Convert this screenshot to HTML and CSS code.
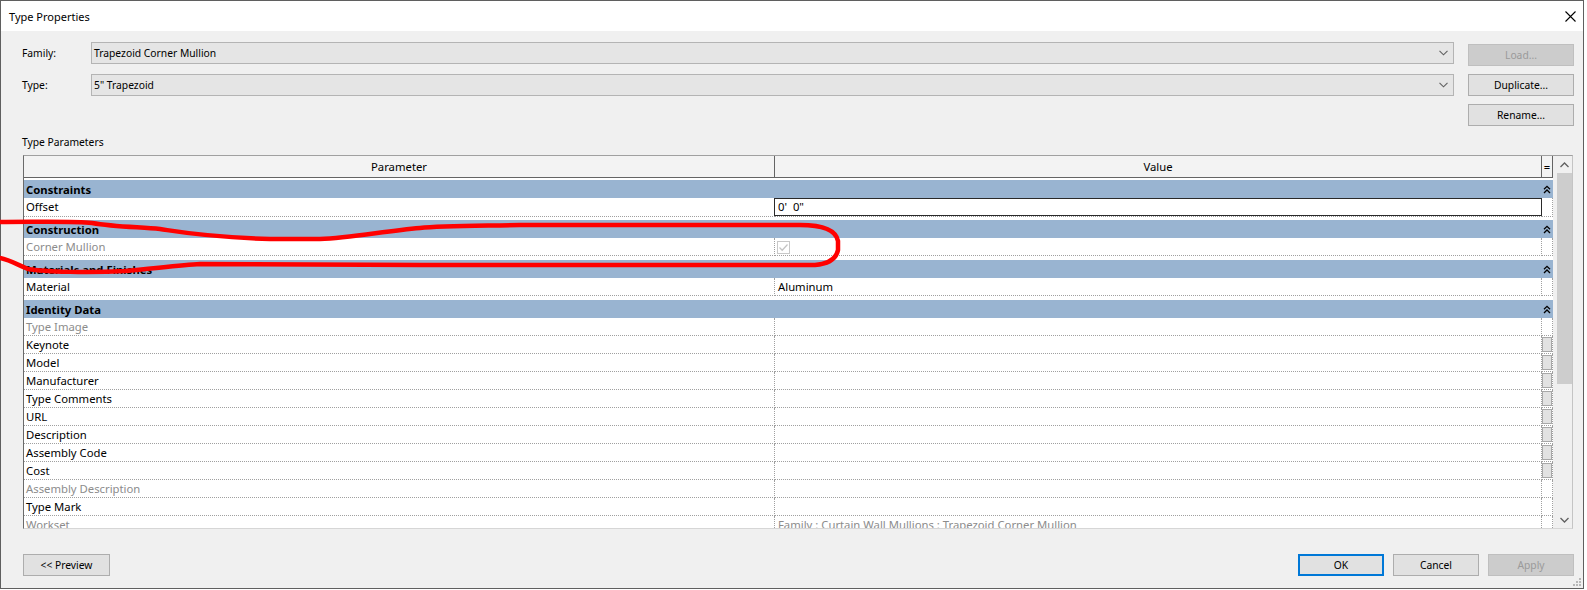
FILE: index.html
```html
<!DOCTYPE html>
<html lang="en">
<head>
    <meta charset="UTF-8">
    <title>Type Properties</title>
    <link rel="stylesheet" href="styles.css">
</head>
<body>

<div class="dialog">

    <!-- Title bar -->
    <div class="titlebar">
        <span>Type Properties</span>
        <svg class="close" width="11" height="11" viewBox="0 0 11 11"><path d="M0.5 0.5 L10.5 10.5 M10.5 0.5 L0.5 10.5" stroke="#000" stroke-width="1.1" fill="none"/></svg>
    </div>

    <div class="content">

        <!-- Family / type pickers -->
        <div class="top">
            <div class="fields">
                <div class="field">
                    <label>Family:</label>
                    <div class="combo"><span>Trapezoid Corner Mullion</span><svg width="9" height="6" viewBox="0 0 9 6"><path d="M0.5 0.8 L4.5 4.8 L8.5 0.8" stroke="#606060" stroke-width="1.1" fill="none"/></svg></div>
                </div>
                <div class="field">
                    <label>Type:</label>
                    <div class="combo"><span>5" Trapezoid</span><svg width="9" height="6" viewBox="0 0 9 6"><path d="M0.5 0.8 L4.5 4.8 L8.5 0.8" stroke="#606060" stroke-width="1.1" fill="none"/></svg></div>
                </div>
            </div>
            <div class="side">
                <button class="btn" disabled>Load...</button>
                <button class="btn">Duplicate...</button>
                <button class="btn">Rename...</button>
            </div>
        </div>

        <div class="section-label">Type Parameters</div>

        <!-- Parameter grid -->
        <div class="grid">
            <div class="grid-main">
                <div class="grid-head">
                    <div>Parameter</div>
                    <div>Value</div>
                    <div>=</div>
                </div>
                <div class="grid-body">

                    <div class="group">
                        <div class="band"><span>Constraints</span><svg width="8" height="9" viewBox="0 0 8 9"><path d="M1 4.3 L4 1.3 L7 4.3 M1 8 L4 5 L7 8" stroke="#000" stroke-width="1.3" fill="none"/></svg></div>
                        <div class="row">
                            <div class="cell">Offset</div>
                            <div class="cell value"><div class="edit">0'  0"</div></div>
                            <div class="cell eq"></div>
                        </div>
                    </div>

                    <div class="group">
                        <div class="band"><span>Construction</span><svg width="8" height="9" viewBox="0 0 8 9"><path d="M1 4.3 L4 1.3 L7 4.3 M1 8 L4 5 L7 8" stroke="#000" stroke-width="1.3" fill="none"/></svg></div>
                        <div class="row">
                            <div class="cell dim">Corner Mullion</div>
                            <div class="cell value"><svg class="check" width="13" height="13" viewBox="0 0 13 13"><rect x="0.5" y="0.5" width="12" height="12" fill="#fff" stroke="#c8c8c8"/><path d="M2.5 6.5 L5.2 9.2 L10.5 3.5" stroke="#c4c4c4" stroke-width="1.3" fill="none"/></svg></div>
                            <div class="cell eq"></div>
                        </div>
                    </div>

                    <div class="group">
                        <div class="band"><span>Materials and Finishes</span><svg width="8" height="9" viewBox="0 0 8 9"><path d="M1 4.3 L4 1.3 L7 4.3 M1 8 L4 5 L7 8" stroke="#000" stroke-width="1.3" fill="none"/></svg></div>
                        <div class="row">
                            <div class="cell">Material</div>
                            <div class="cell value">Aluminum</div>
                            <div class="cell eq"></div>
                        </div>
                    </div>

                    <div class="group">
                        <div class="band"><span>Identity Data</span><svg width="8" height="9" viewBox="0 0 8 9"><path d="M1 4.3 L4 1.3 L7 4.3 M1 8 L4 5 L7 8" stroke="#000" stroke-width="1.3" fill="none"/></svg></div>
                        <div class="row"><div class="cell dim">Type Image</div><div class="cell value"></div><div class="cell eq"></div></div>
                        <div class="row"><div class="cell">Keynote</div><div class="cell value"></div><div class="cell eq"><div class="eqbtn"></div></div></div>
                        <div class="row"><div class="cell">Model</div><div class="cell value"></div><div class="cell eq"><div class="eqbtn"></div></div></div>
                        <div class="row"><div class="cell">Manufacturer</div><div class="cell value"></div><div class="cell eq"><div class="eqbtn"></div></div></div>
                        <div class="row"><div class="cell">Type Comments</div><div class="cell value"></div><div class="cell eq"><div class="eqbtn"></div></div></div>
                        <div class="row"><div class="cell">URL</div><div class="cell value"></div><div class="cell eq"><div class="eqbtn"></div></div></div>
                        <div class="row"><div class="cell">Description</div><div class="cell value"></div><div class="cell eq"><div class="eqbtn"></div></div></div>
                        <div class="row"><div class="cell">Assembly Code</div><div class="cell value"></div><div class="cell eq"><div class="eqbtn"></div></div></div>
                        <div class="row"><div class="cell">Cost</div><div class="cell value"></div><div class="cell eq"><div class="eqbtn"></div></div></div>
                        <div class="row"><div class="cell dim">Assembly Description</div><div class="cell value"></div><div class="cell eq"></div></div>
                        <div class="row"><div class="cell">Type Mark</div><div class="cell value"></div><div class="cell eq"></div></div>
                        <div class="row"><div class="cell dim">Workset</div><div class="cell value dim">Family : Curtain Wall Mullions : Trapezoid Corner Mullion</div><div class="cell eq"></div></div>
                    </div>

                </div>
            </div>

            <!-- Vertical scrollbar -->
            <div class="scrollbar">
                <div class="arrow"><svg width="9" height="6" viewBox="0 0 9 6"><path d="M0.5 5 L4.5 1 L8.5 5" stroke="#606060" stroke-width="1.3" fill="none"/></svg></div>
                <div class="track"><div class="thumb"></div></div>
                <div class="arrow"><svg width="9" height="6" viewBox="0 0 9 6"><path d="M0.5 1 L4.5 5 L8.5 1" stroke="#606060" stroke-width="1.3" fill="none"/></svg></div>
            </div>
        </div>

        <!-- Dialog buttons -->
        <div class="footer">
            <button class="btn preview">&lt;&lt; Preview</button>
            <div class="actions">
                <button class="btn default">OK</button>
                <button class="btn">Cancel</button>
                <button class="btn" disabled>Apply</button>
            </div>
        </div>

    </div>

    <svg class="grip" width="9" height="9" viewBox="0 0 9 9">
        <rect x="6" y="0" width="2" height="2" fill="#b8b8b8"/>
        <rect x="3" y="3" width="2" height="2" fill="#b8b8b8"/>
        <rect x="6" y="3" width="2" height="2" fill="#b8b8b8"/>
        <rect x="0" y="6" width="2" height="2" fill="#b8b8b8"/>
        <rect x="3" y="6" width="2" height="2" fill="#b8b8b8"/>
        <rect x="6" y="6" width="2" height="2" fill="#b8b8b8"/>
    </svg>

    <!-- Hand drawn markup over the dialog -->
    <svg class="markup" width="1587" height="590" viewBox="0 0 1587 590">
        <path d="M0 222 C40 222 75 221 92 223 C115 227 140 227 160 229 C180 232 205 237 270 239 L320 239 C350 238 385 231 420 228 C440 226 470 226 520 225 L800 225 C822 225 836 230 838 241 L838 250 C836 260 827 264 815 265 L420 265 L200 264 C180 265 150 269 125 271 C90 273 45 272 28 269 C18 265 10 260 0 258" stroke="#ff0000" stroke-width="4.5" fill="none" stroke-linecap="round" stroke-linejoin="round"/>
    </svg>

</div>

</body>
</html>
```

FILE: styles.css
```css
/* Basic page setup */
* {
    box-sizing: border-box;
}

body {
    margin: 0;
    background-color: #ffffff;
    font-family: "Noto Sans", "Segoe UI", sans-serif;
    color: #000000;
}

/* Dialog frame */
.dialog {
    position: relative;
    width: 1584px;
    height: 589px;
    border: 1px solid #5f5f5f;
    background-color: #f0f0f0;
    display: flex;
    flex-direction: column;
}

.titlebar {
    height: 30px;
    background-color: #ffffff;
    display: flex;
    align-items: center;
    justify-content: space-between;
    padding: 0 7px 0 8px;
    font-size: 11px;
}

.content {
    flex: 1;
    padding: 11px 9px 0 21px;
    display: flex;
    flex-direction: column;
    font-size: 10.3px;
}

/* Family and type pickers */
.top {
    display: flex;
    gap: 14px;
}

.fields {
    flex: 1;
    display: flex;
    flex-direction: column;
    gap: 10px;
}

.field {
    display: flex;
    align-items: center;
    height: 22px;
}

.field label {
    width: 69px;
}

.combo {
    flex: 1;
    height: 22px;
    border: 1px solid #b4b4b4;
    background-color: #e5e5e5;
    display: flex;
    align-items: center;
    justify-content: space-between;
    padding: 0 5px 0 2px;
}

.side {
    width: 106px;
    display: flex;
    flex-direction: column;
    gap: 8px;
    padding-top: 2px;
}

/* Buttons */
.btn {
    height: 22px;
    padding: 0;
    border: 1px solid #adadad;
    background-color: #e1e1e1;
    font-family: inherit;
    font-size: 10.3px;
    color: #000000;
}

.btn:disabled {
    background-color: #cccccc;
    border-color: #bfbfbf;
    color: #9a9a9a;
}

.btn.default {
    border-color: #0078d7;
    box-shadow: inset 0 0 0 1px #0078d7;
}

.section-label {
    margin: 9px 0 6px 0;
    line-height: 14px;
}

/* Parameter grid */
.grid {
    height: 374px;
    margin: 0 1px;
    display: flex;
    border-top: 1px solid #a0a0a0;
    border-left: 1px solid #6a6a6a;
    border-right: 1px solid #c4c4c4;
    border-bottom: 1px solid #d6d6d6;
    background-color: #ffffff;
    font-size: 11.3px;
}

.grid-main {
    width: 1529px;
    display: flex;
    flex-direction: column;
    overflow: hidden;
}

.grid-head {
    display: grid;
    grid-template-columns: 751px 767px 11px;
    height: 22px;
    border-bottom: 1px solid #646464;
    background-color: #f3f3f3;
}

.grid-head div {
    border-right: 1px solid #646464;
    text-align: center;
    line-height: 21px;
}

.grid-body {
    flex: 1;
    overflow: hidden;
}

.group {
    margin-top: 4px;
}

.group:first-child {
    margin-top: 2px;
}

.band {
    height: 18px;
    background-color: #99b4d1;
    display: flex;
    align-items: center;
    justify-content: space-between;
    padding: 0 2px 0 2px;
    font-weight: bold;
}

.row {
    display: grid;
    grid-template-columns: 751px 767px 11px;
    height: 18px;
}

.cell {
    border-right: 1px dotted #a0a0a0;
    border-bottom: 1px dotted #a0a0a0;
    line-height: 17px;
    padding-left: 2px;
    white-space: nowrap;
    overflow: hidden;
}

.cell.value {
    padding-left: 3px;
}

.cell.eq {
    padding-left: 0;
}

.dim {
    color: #8c8c8c;
}

.edit {
    height: 18px;
    margin: 0 0 0 -4px;
    border: 1px solid #2a2a2a;
    padding-left: 3px;
    line-height: 16px;
    white-space: pre;
}

.cell.value:has(.edit) {
    overflow: visible;
    border-right: none;
}

.check {
    display: block;
    margin: 3px 0 0 -1px;
}

.eqbtn {
    width: 10px;
    height: 15px;
    margin-top: 1px;
    border: 1px solid #a8a8a8;
    background-color: #e2e2e2;
}

/* Scrollbar */
.scrollbar {
    width: 19px;
    display: flex;
    flex-direction: column;
    background-color: #f0f0f0;
}

.arrow {
    height: 17px;
    display: flex;
    align-items: center;
    justify-content: center;
    padding-left: 3px;
}

.track {
    flex: 1;
    padding-left: 4px;
}

.thumb {
    height: 211px;
    background-color: #cdcdcd;
}

/* Footer */
.footer {
    margin-top: 25px;
    padding-left: 1px;
    display: flex;
    justify-content: space-between;
}

.footer .btn {
    width: 86px;
}

.footer .preview {
    width: 87px;
}

.actions {
    display: flex;
    gap: 9px;
}

.grip {
    position: absolute;
    right: 1px;
    bottom: 1px;
}

/* Red markup overlay */
.markup {
    position: absolute;
    top: -1px;
    left: -1px;
    pointer-events: none;
}
```
